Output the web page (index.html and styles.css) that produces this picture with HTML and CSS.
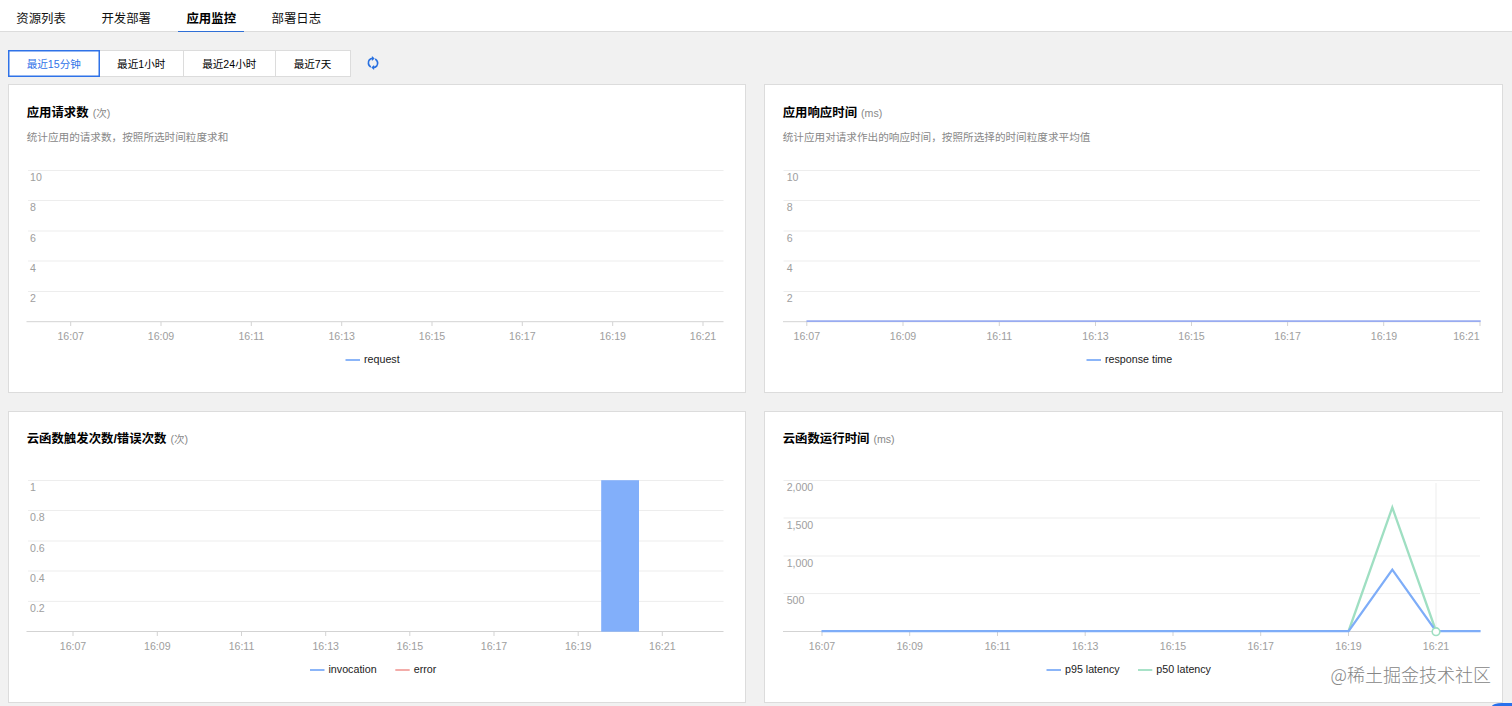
FILE: index.html
```html
<!DOCTYPE html>
<html lang="zh-CN">
<head>
<meta charset="utf-8">
<title>应用监控</title>
<link rel="stylesheet" href="styles.css">
</head>
<body>
<nav class="tabs">
  <a class="tab">资源列表</a>
  <a class="tab">开发部署</a>
  <a class="tab active">应用监控</a>
  <a class="tab">部署日志</a>
</nav>
<div class="toolbar">
  <div class="segments">
    <button class="segment selected">最近15分钟</button>
    <button class="segment hour">最近1小时</button>
    <button class="segment day">最近24小时</button>
    <button class="segment week">最近7天</button>
  </div>
  <svg class="refresh" viewBox="0 0 14 14">
    <path class="refresh-arc" d="M4.8 11.1A4.9 4.9 0 0 1 3.4 3.8Q4.7 2.4 6.6 2.4M9.2 2.9A4.9 4.9 0 0 1 10.6 10.2Q9.3 11.6 7.4 11.6"/>
    <path class="refresh-head" d="M5.9 0.1L8.7 2.4L5.9 4.9zM8.1 13.9L5.3 11.6L8.1 9.1z"/>
  </svg>
</div>
<main class="grid">
  <section class="card described">
    <h2 class="title">应用请求数<span class="unit">(次)</span></h2>
    <p class="desc">统计应用的请求数，按照所选时间粒度求和</p>
    <svg class="chart" width="700" height="214" viewBox="26 160 700 214">
      <path class="rule" d="M28 170.5H723.5M28 200.5H723.5M28 231H723.5M28 261H723.5M28 291.5H723.5"/>
      <path class="axis" d="M26.5 321.7H723.5M70.7 322V326M161 322V326M251.3 322V326M341.7 322V326M432 322V326M522.3 322V326M612.7 322V326M703 322V326"/>
      <g class="ylabel"><text x="30" y="181.2">10</text><text x="30" y="211.4">8</text><text x="30" y="241.8">6</text><text x="30" y="272">4</text><text x="30" y="302.2">2</text></g>
      <g class="xlabel"><text x="70.7" y="340.2">16:07</text><text x="161" y="340.2">16:09</text><text x="251.3" y="340.2">16:11</text><text x="341.7" y="340.2">16:13</text><text x="432" y="340.2">16:15</text><text x="522.3" y="340.2">16:17</text><text x="612.7" y="340.2">16:19</text><text x="703" y="340.2">16:21</text></g>
      <path class="key blue" d="M345.5 360H360"/><text class="legend" x="364" y="363.4">request</text>
    </svg>
  </section>
  <section class="card described">
    <h2 class="title">应用响应时间<span class="unit">(ms)</span></h2>
    <p class="desc">统计应用对请求作出的响应时间，按照所选择的时间粒度求平均值</p>
    <svg class="chart" width="700" height="214" viewBox="782 160 700 214">
      <path class="rule" d="M783.5 170.5H1480M783.5 200.5H1480M783.5 231H1480M783.5 261H1480M783.5 291.5H1480"/>
      <path class="axis" d="M783 321.7H1480M806.8 322V326M903 322V326M999.3 322V326M1095.5 322V326M1191.5 322V326M1287.6 322V326M1383.7 322V326M1480 322V326"/>
      <path class="series violet" d="M806.5 321.2H1480.7"/>
      <g class="ylabel"><text x="786.7" y="181.2">10</text><text x="786.7" y="211.4">8</text><text x="786.7" y="241.8">6</text><text x="786.7" y="272">4</text><text x="786.7" y="302.2">2</text></g>
      <g class="xlabel"><text x="806.8" y="340.2">16:07</text><text x="903" y="340.2">16:09</text><text x="999.3" y="340.2">16:11</text><text x="1095.5" y="340.2">16:13</text><text x="1191.5" y="340.2">16:15</text><text x="1287.6" y="340.2">16:17</text><text x="1384" y="340.2">16:19</text><text x="1466.4" y="340.2">16:21</text></g>
      <path class="key blue" d="M1086.5 360H1101"/><text class="legend" x="1105" y="363.4">response time</text>
    </svg>
  </section>
  <section class="card">
    <h2 class="title">云函数触发次数/错误次数<span class="unit">(次)</span></h2>
    <svg class="chart" width="700" height="214" viewBox="26 470 700 214">
      <path class="rule" d="M28 480.5H723.5M28 510.5H723.5M28 541H723.5M28 571H723.5M28 601.4H723.5"/>
      <path class="axis" d="M26.5 631.5H723.5M73 632V636M157.3 632V636M241.5 632V636M325.7 632V636M409.8 632V636M494 632V636M578.2 632V636M662.3 632V636"/>
      <rect class="bar" x="601.2" y="480.2" width="37.8" height="151.5"/>
      <g class="ylabel"><text x="30" y="491.2">1</text><text x="30" y="521.4">0.8</text><text x="30" y="551.8">0.6</text><text x="30" y="582">0.4</text><text x="30" y="612.2">0.2</text></g>
      <g class="xlabel"><text x="73" y="650">16:07</text><text x="157.3" y="650">16:09</text><text x="241.5" y="650">16:11</text><text x="325.7" y="650">16:13</text><text x="409.8" y="650">16:15</text><text x="494" y="650">16:17</text><text x="578.2" y="650">16:19</text><text x="662.3" y="650">16:21</text></g>
      <path class="key blue" d="M310 670H324.5"/><text class="legend" x="328.5" y="673.4">invocation</text>
      <path class="key red" d="M395.3 670H409.7"/><text class="legend" x="413.7" y="673.4">error</text>
    </svg>
  </section>
  <section class="card">
    <h2 class="title">云函数运行时间<span class="unit">(ms)</span></h2>
    <svg class="chart" width="700" height="214" viewBox="782 470 700 214">
      <path class="rule" d="M783.5 480.5H1480M783.5 518H1480M783.5 556H1480M783.5 593.6H1480M1436 483V631"/>
      <path class="axis" d="M783 631.5H1480M822 632V636M909.7 632V636M997.5 632V636M1085.2 632V636M1173 632V636M1260.7 632V636M1348.5 632V636M1436 632V636"/>
      <path class="series green" d="M1348.6 631L1392.3 507.5L1436 631"/>
      <path class="series blue" d="M821.5 631.1H1348.6L1392.3 569.7L1436 631.1H1480.6"/>
      <circle class="point" cx="1436" cy="631.7" r="3.8"/>
      <g class="ylabel"><text x="786.7" y="491.2">2,000</text><text x="786.7" y="529">1,500</text><text x="786.7" y="566.8">1,000</text><text x="786.7" y="604.4">500</text></g>
      <g class="xlabel"><text x="822" y="650">16:07</text><text x="909.7" y="650">16:09</text><text x="997.5" y="650">16:11</text><text x="1085.2" y="650">16:13</text><text x="1173" y="650">16:15</text><text x="1260.7" y="650">16:17</text><text x="1348.5" y="650">16:19</text><text x="1436" y="650">16:21</text></g>
      <path class="key blue" d="M1046.5 670H1061"/><text class="legend" x="1065" y="673.4">p95 latency</text>
      <path class="key green" d="M1138 670H1152.3"/><text class="legend" x="1156.3" y="673.4">p50 latency</text>
    </svg>
  </section>
</main>
<div class="watermark">@稀土掘金技术社区</div>
<div class="float-button"></div>
</body>
</html>
```
FILE: styles.css
```css
* { box-sizing: border-box; }
body {
  margin: 0;
  position: relative;
  height: 706px;
  overflow: hidden;
  background: #f1f1f1;
  color: #000;
  font-family: "Liberation Sans", "Noto Sans CJK SC", sans-serif;
}
.tabs {
  display: flex;
  gap: 18.9px;
  height: 32px;
  padding-left: 8px;
  background: #fff;
  border-bottom: 1px solid #dcdcdc;
}
.tab {
  width: 66.2px;
  height: 32px;
  padding-top: 8px;
  text-align: center;
  font-size: 12.4px;
  line-height: 23px;
  color: #111;
}
.tab.active { font-weight: 700; color: #000; border-bottom: 1px solid #2f6fd6; }
.toolbar { display: flex; align-items: flex-start; height: 52px; padding: 18px 0 0 8px; }
.segments { display: flex; height: 26.5px; }
.segment {
  margin: 0;
  padding: 1px 0 0;
  border: 1px solid #dcdcdc;
  border-left: 0;
  background: #fff;
  font-family: inherit;
  font-size: 10.6px;
  line-height: 24px;
  color: #000;
}
.selected { width: 91.5px; border: 1px solid #2f72e8; box-shadow: inset 0 0 0 0.5px #2f72e8; color: #2f72e8; }
.hour { width: 84.5px; }
.day { width: 91.5px; }
.week { width: 75px; }
.refresh { width: 14px; height: 14px; margin: 6px 0 0 15.5px; }
.refresh-arc { fill: none; stroke: #2870e0; stroke-width: 1.7; }
.refresh-head { fill: #2870e0; }
.grid {
  display: grid;
  grid-template-columns: 738px 739px;
  grid-template-rows: 309px 292px;
  gap: 18px;
  padding: 0 0 0 8px;
}
.card {
  display: flex;
  flex-direction: column;
  padding: 18px 17px 0;
  background: #fff;
  border: 1px solid #dcdcdc;
}
.card.described { padding-top: 19px; }
.title { margin: 0 0 0 0.7px; font-size: 12.4px; line-height: 18px; font-weight: 700; white-space: nowrap; }
.unit { margin-left: 4px; font-size: 10.6px; font-weight: 400; color: #888; }
.desc { margin: 7px 0 0 0.7px; font-size: 10.62px; line-height: 16px; color: #888; }
.chart { display: block; flex: none; margin-top: auto; margin-bottom: 18px; }
.rule { fill: none; stroke: #ededed; stroke-width: 1; }
.axis { fill: none; stroke: #d3d3d3; stroke-width: 1; }
.ylabel, .xlabel { fill: #9e9e9e; font-size: 10.6px; }
.xlabel { text-anchor: middle; }
.legend { fill: #222; font-size: 10.7px; }
.key { stroke-width: 1.8; }
.series { fill: none; stroke-width: 2.3; }
.blue { stroke: #7eadf8; }
.violet { stroke: #98abf0; stroke-width: 1.7; }
.green { stroke: #9fdfc2; }
.red { stroke: #f2a3a0; }
.bar { fill: #82affa; }
.point { fill: #fff; stroke: #9fdfc2; stroke-width: 1.6; }
.watermark {
  position: absolute;
  left: 1330.5px;
  top: 661px;
  font-size: 18px;
  line-height: 26px;
  font-weight: 300;
  white-space: nowrap;
  font-family: "Noto Sans CJK SC", sans-serif;
  color: #858585;
  text-shadow: 0.5px 0.5px 0 #fff;
}
.float-button {
  position: absolute;
  left: 1492px;
  top: 703px;
  width: 20px;
  height: 3px;
  border-top-left-radius: 10px 3px;
  background: #2970ec;
}
```
